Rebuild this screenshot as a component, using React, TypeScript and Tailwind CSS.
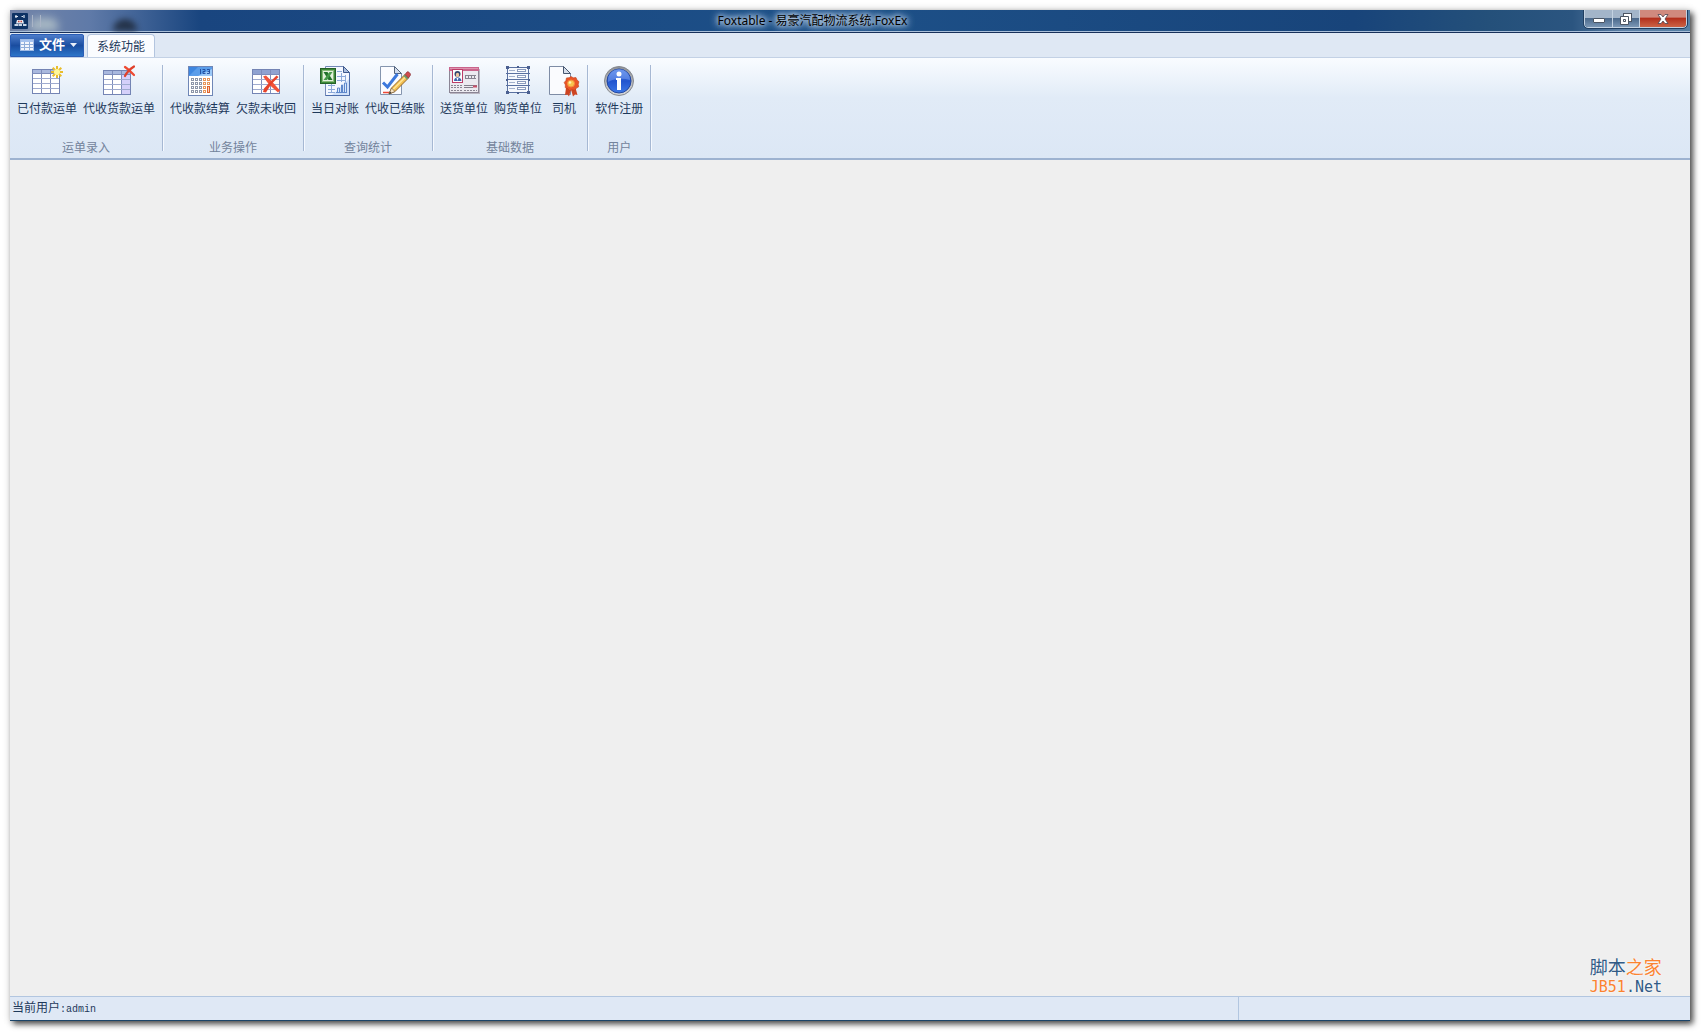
import { ReactNode } from "react";

function PaidOrderIcon() {
  return (
    <svg viewBox="0 0 32 32" className="size-8" aria-hidden="true">
      <rect x="1.5" y="4.5" width="27" height="24" fill="#fff" stroke="#7484b4" />
      <rect x="2" y="5" width="26" height="3" fill="#a9b8de" />
      <path d="M1 8.5h28M10.5 5v24M19.5 5v24" stroke="#7e8dbb" fill="none" />
      <path d="M2 13.5h26M2 18.5h26M2 23.5h26" stroke="#9fabcf" fill="none" />
      <path d="M26 1v12M20 7h12M21.7 2.7l8.6 8.6M30.3 2.7l-8.6 8.6" stroke="#e9bd2c" strokeWidth="2" />
      <circle cx="26" cy="7" r="3" fill="#fff89c" />
    </svg>
  );
}

function CollectOrderIcon() {
  return (
    <svg viewBox="0 0 32 32" className="size-8" aria-hidden="true">
      <rect x="0.5" y="5.5" width="27" height="24" fill="#fff" stroke="#7484b4" />
      <rect x="1" y="6" width="26" height="3" fill="#a9b8de" />
      <rect x="19" y="10" width="8" height="19" fill="#d5d0fa" />
      <path d="M0 9.5h28M9.5 6v23M18.5 6v23" stroke="#7e8dbb" fill="none" />
      <path d="M1 14.5h26M1 19.5h26M1 24.5h26" stroke="#9fabcf" fill="none" />
      <path d="M22 2c3 2 6 5 9 8" stroke="#ee4a32" strokeWidth="2.2" fill="none" strokeLinecap="round" />
      <path d="M31 1.5C27 4 24 7 22 11" stroke="#e0402b" strokeWidth="2.2" fill="none" strokeLinecap="round" />
    </svg>
  );
}

function CalculatorIcon() {
  const rows = [14, 18, 22, 26];
  return (
    <svg viewBox="0 0 32 32" className="size-8" aria-hidden="true">
      <rect x="4.5" y="1.5" width="24" height="29" fill="#fff" stroke="#6f86b6" />
      <rect x="5" y="2" width="23" height="9" fill="#5a9dea" />
      <path d="M5 2h9L5 11z" fill="#3e87e0" />
      <path d="M28 4v7H14z" fill="#9cc9f8" />
      <path d="M16.5 4v5M18.5 4.5H21v2h-2v2h2.500M23 4.500h2.500v4H23M23.500 6.500h2" stroke="#1d4a9c" strokeWidth=".9" fill="none" />
      {rows.map((y) => (
        <g key={y} fill="#fff">
          <rect x="7.500" y={y - 0.5} width="2" height="2" stroke="#8d96a8" />
          <rect x="11.500" y={y - 0.5} width="2" height="2" stroke="#8d96a8" />
          <rect x="15.500" y={y - 0.5} width="2" height="2" stroke="#8d96a8" />
          <rect x="19.500" y={y - 0.5} width="2" height="2" stroke="#e8965a" />
          {y < 22 && <rect x="23.500" y={y - 0.5} width="2" height="2" stroke="#e8965a" />}
        </g>
      ))}
      <rect x="23.500" y="21.500" width="2" height="6" fill="#fbd3b8" stroke="#e0622d" />
    </svg>
  );
}

function UnpaidIcon() {
  return (
    <svg viewBox="0 0 32 32" className="size-8" aria-hidden="true">
      <rect x="2.5" y="4.5" width="27" height="24" fill="#fff" stroke="#7484b4" />
      <rect x="3" y="5" width="26" height="4" fill="#8fa2d1" />
      <path d="M2 9.500h28M11.500 5v23M20.500 5v23" stroke="#7e8dbb" fill="none" />
      <path d="M3 14.500h26M3 19.500h26M3 24.500h26" stroke="#9fabcf" fill="none" />
      <path d="M13 11.500l3-1 6 6 8 9-2 2-9-8z" fill="#f2533a" />
      <path d="M26.500 10.500l2 1.500-7.500 7.500-5 8-3-.5 1-3.500 5.500-6z" fill="#e6432b" />
    </svg>
  );
}

function ExcelIcon() {
  return (
    <svg viewBox="0 0 32 32" className="size-8" aria-hidden="true">
      <path d="M6.500 1.500h18l6 6v23h-24z" fill="#f3f7ff" stroke="#7489b8" />
      <path d="M30 14v16H13z" fill="#cfe0f9" />
      <path d="M24.500 1.500l6 6h-6z" fill="#a9bddd" stroke="#3e588b" />
      <path d="M30.500 7.500v23h-24" stroke="#4d6dab" fill="none" />
      <path d="M18 6.500h5M18 11.500h9M18 15.500h9M9 20.500h7M9 24.500h7M9 27.500h7M12.500 19v9M22.500 8v9M26.500 10v7" stroke="#8ba9d9" fill="none" />
      <path d="M17 27.500h11M18.500 27v-4h2v4M22.500 27v-7h1v7M25.500 27v-9h2v9" stroke="#5f88cb" fill="#d9e8fb" />
      <rect x="1.500" y="3.500" width="15" height="15" fill="#3d8a3a" stroke="#256128" />
      <rect x="3.500" y="5.500" width="11" height="11" fill="#e4f2dc" stroke="#87b879" />
      <path d="M4.500 7h4l5 8h-4z" fill="#22712a" />
      <path d="M10.500 7h3l-5.500 8H4.500z" fill="#459948" />
    </svg>
  );
}

function CheckedNoteIcon() {
  return (
    <svg viewBox="0 0 32 32" className="size-8" aria-hidden="true">
      <path d="M1.500 1.500h14l7 7v21h-21z" fill="#fbfcff" stroke="#8595ae" />
      <path d="M15.500 1.500v7h7z" fill="#d2dcec" stroke="#53637c" />
      <path d="M4 27.500h8" stroke="#ee4937" strokeWidth="1.500" />
      <path d="M4 17.500L8.500 22 18.500 9" stroke="#3c78dc" strokeWidth="3" fill="none" />
      <path d="M10 29l2.500-6L26 9.500l3.500 3.500L16 26.500z" fill="#f3bf50" stroke="#95672a" />
      <path d="M14 24.500L27 11.500" stroke="#ffe596" strokeWidth="1.500" />
      <path d="M10 29l2.500-6 3.500 3.500z" fill="#f7e3c3" stroke="#7a6242" strokeWidth=".7" />
      <path d="M10 29l1-2.500 1.500 1.500z" fill="#333" />
      <path d="M24.500 11l1.500-1.500 3.500 3.500-1.500 1.500z" fill="#6d9a6a" />
      <path d="M26 9.500L28 7c1-1 4 1.500 3.500 3l-2 3z" fill="#d24a4c" stroke="#873439" strokeWidth=".7" />
    </svg>
  );
}

function SenderCardIcon() {
  return (
    <svg viewBox="0 0 32 32" className="size-8" aria-hidden="true">
      <rect x="1.500" y="2.500" width="29" height="25" fill="#eceaf0" stroke="#8b8595" />
      <path d="M2 28.500h30M31.500 4v25" stroke="#bab7c2" />
      <rect x="1" y="2" width="30" height="4" fill="#c9648b" />
      <path d="M2 3.500h28" stroke="#df93af" />
      <rect x="4.500" y="4.500" width="10" height="13" fill="#fff" stroke="#bd3c68" />
      <circle cx="9.500" cy="9" r="3" fill="#34456f" />
      <ellipse cx="9.500" cy="10" rx="1.700" ry="2.200" fill="#edc49f" />
      <path d="M6 16c0-5 7-5 7.500 0z" fill="#3f65ad" />
      <path d="M8.500 13h2L9.500 16z" fill="#fff" />
      <path d="M17 10.500h11M17 13.500h11" stroke="#87838f" />
      <path d="M17 12h12" stroke="#87838f" strokeDasharray="1 2" strokeWidth="2" />
      <path d="M3 20.500h12M3 22.500h12M3 25.500h12M16 25.500h13" stroke="#8a8693" strokeDasharray="2 1" />
      <path d="M16 20.500h13M16 22.500h9" stroke="#827e8b" />
      <path d="M25 21.500h4" stroke="#c94f68" strokeWidth="2" />
    </svg>
  );
}

function BuyerRackIcon() {
  const shelves = [4, 10, 16, 22];
  return (
    <svg viewBox="0 0 32 32" className="size-8" aria-hidden="true">
      <rect x="5" y="3" width="22" height="25" fill="#f5f8fd" />
      {shelves.map((y) => (
        <g key={y} fill="none">
          <path d={`M7 ${y + 1.5}h6`} stroke="#a3b1cc" />
          <rect x="15.500" y={y + 0.5} width="8" height="2" fill="#fff" stroke="#8b9bbd" />
        </g>
      ))}
      <path d="M4 2.500h24M4 8.500h24M4 14.500h24M4 20.500h24M4 27.500h24" stroke="#5970a0" />
      <path d="M5.500 2v26M26.500 2v26" stroke="#5970a0" />
      <path d="M4 1h3v3H4zM15 1h2v2h-2zM25 1h3v3h-3zM4 14h2v2H4zM26 14h2v2h-2zM4 26h3v3H4zM15 27h2v2h-2zM25 26h3v3h-3z" fill="#4a5f90" />
    </svg>
  );
}

function DriverIcon() {
  return (
    <svg viewBox="0 0 32 32" className="size-8" aria-hidden="true">
      <path d="M1.500 1.500h14l7 7v21h-21z" fill="#fafbfe" stroke="#7e8ca5" />
      <path d="M15.500 1.500v7h7z" fill="#d5ddea" stroke="#46566f" />
      <path d="M18 23l-1 7 2.500-.5 1.500 2 2-7 2 7 2-2 2.500.5-2-7z" fill="#ce4421" />
      <path
        d="M23 11.500l2.300 1.300 2.700-.2 1 2.400 2 1.700-.8 2.500.5 2.600-2.300 1.300-1.700 2.200-2.600-.5-2.600.8-1.800-2-2.500-1 .2-2.700-1.200-2.400 1.700-2 .6-2.600 2.600-.2z"
        fill="#ea5526"
        stroke="#bd3e1c"
        strokeWidth=".6"
      />
      <circle cx="23" cy="18.500" r="3.500" fill="#f9c34e" stroke="#f58d3e" />
      <circle cx="22" cy="17.500" r="1.300" fill="#fff3b0" />
    </svg>
  );
}

function RegisterIcon() {
  return (
    <svg viewBox="0 0 32 32" className="size-8" aria-hidden="true">
      <defs>
        <linearGradient id="ring" x1="0" y1="0" x2="0" y2="1">
          <stop offset="0" stopColor="#8d9096" />
          <stop offset="1" stopColor="#d7d8da" />
        </linearGradient>
        <linearGradient id="disc" x1="0" y1="0" x2="0" y2="1">
          <stop offset="0" stopColor="#5d8dec" />
          <stop offset=".5" stopColor="#2355ce" />
          <stop offset="1" stopColor="#3d78e6" />
        </linearGradient>
      </defs>
      <circle cx="16" cy="16" r="14.500" fill="url(#ring)" stroke="#86898f" />
      <circle cx="16" cy="16" r="12" fill="url(#disc)" stroke="#2347a0" />
      <path d="M5 15a11 11 0 0 1 22 0c-7-2-15-2-22 2z" fill="#7da3f1" opacity=".5" />
      <circle cx="16" cy="9" r="2.500" fill="#fff" />
      <path d="M13 13h5v12h-4V15h-1z" fill="#fff" />
    </svg>
  );
}

const groups: { title: string; items: { label: string; icon: ReactNode }[] }[] = [
  {
    title: "运单录入",
    items: [
      { label: "已付款运单", icon: <PaidOrderIcon /> },
      { label: "代收货款运单", icon: <CollectOrderIcon /> },
    ],
  },
  {
    title: "业务操作",
    items: [
      { label: "代收款结算", icon: <CalculatorIcon /> },
      { label: "欠款未收回", icon: <UnpaidIcon /> },
    ],
  },
  {
    title: "查询统计",
    items: [
      { label: "当日对账", icon: <ExcelIcon /> },
      { label: "代收已结账", icon: <CheckedNoteIcon /> },
    ],
  },
  {
    title: "基础数据",
    items: [
      { label: "送货单位", icon: <SenderCardIcon /> },
      { label: "购货单位", icon: <BuyerRackIcon /> },
      { label: "司机", icon: <DriverIcon /> },
    ],
  },
  { title: "用户", items: [{ label: "软件注册", icon: <RegisterIcon /> }] },
];

function TitleBar() {
  return (
    <header className="relative flex h-[23px] shrink-0 items-start overflow-hidden border-b border-[#17305a] bg-[linear-gradient(90deg,#7384a8_0,#5f7aa8_80px,#19457f_190px,#1d5088_50%,#18447a_80%,#24507a_88%,#2b5580_93%,#5c7fa5_96%,#5580a5_100%)] shadow-[inset_0_-1px_0_#a9bfd9]">
      {/* desktop showing through the glass */}
      <div className="absolute top-2 left-5 h-[13px] w-7 rounded-t-lg bg-[#c2d0d0] opacity-70 blur-xs" />
      <div className="absolute top-[9px] left-[103px] h-3 w-6 rounded-t-full bg-[#1b2534] opacity-80 blur-[3px]" />
      <div className="relative flex items-center gap-1 pt-[3px] pl-[2px]">
        <svg viewBox="0 0 16 16" className="size-4" aria-hidden="true">
          <rect width="16" height="16" rx="1" fill="#0d3264" />
          <path d="M3 3.500h3M4 2v3M9.500 3.500h1.500M12 2v3" stroke="#dbe5f2" strokeWidth="1.200" />
          <path d="M5 7h6l1 3.500H4z" fill="#e6ecf4" />
          <path d="M6 8.500h1.500M8.500 8.500H10" stroke="#c7443c" strokeWidth="1.500" />
          <path d="M2.500 12h4M7 12h3M11 12h3.500" stroke="#c8d5e6" strokeWidth="2" />
        </svg>
        <div className="h-3 w-[9px] border-x border-[#a9b4c6]" />
      </div>
      <h1 className="relative flex-1 pt-px text-center text-xs leading-5 text-black [text-shadow:0_0_4px_#b7cde6,0_0_6px_#b7cde6,0_0_8px_#b7cde6,0_0_10px_#b7cde6]">
        Foxtable - 易豪汽配物流系统.FoxEx
      </h1>
      <div className="relative flex justify-end pr-[3px]">
        <div className="flex h-[18px] overflow-hidden rounded-b border border-t-0 border-[#c3d2e2] outline outline-[#203e60]">
          <button aria-label="最小化" className="flex w-7 items-center justify-center border-r border-[#c3d2e2] bg-linear-to-b from-[#a3b5c9] from-45% via-[#4c6a8c] via-50% to-[#7b97b5]">
            <svg viewBox="0 0 12 10" className="h-[10px] w-3">
              <rect x="0.500" y="4.500" width="11" height="4" rx=".5" fill="#fff" stroke="#4b5563" />
            </svg>
          </button>
          <button aria-label="还原" className="flex w-[27px] items-center justify-center border-r border-[#c3d2e2] bg-linear-to-b from-[#a3b5c9] from-45% via-[#4c6a8c] via-50% to-[#7b97b5]">
            <svg viewBox="0 0 12 12" className="size-3">
              <rect x="3.500" y=".5" width="8" height="8" fill="#fff" stroke="#4b5563" />
              <path d="M.5 3.500h8v8h-8zM3.500 6.500v2h2v-2z" fill="#fff" fillRule="evenodd" stroke="#4b5563" />
            </svg>
          </button>
          <button aria-label="关闭" className="flex w-[46px] items-center justify-center bg-linear-to-b from-[#d08a7e] from-40% via-[#b3301d] via-50% to-[#cb6245]">
            <svg viewBox="0 0 12 10" className="h-[10px] w-3">
              <path d="M1 .5h3L6 3 8 .5h3L8 5l3 4.500H8L6 7 4 9.500H1L4 5z" fill="#fff" stroke="#4b4450" strokeWidth=".8" />
            </svg>
          </button>
        </div>
      </div>
    </header>
  );
}

export default function App() {
  return (
    <div className="h-screen bg-white pt-[10px] pr-[11px] pb-[11px] pl-[10px] font-['Noto_Sans','Noto_Sans_CJK_SC',sans-serif]">
      <div className="flex h-full flex-col border-b border-[#1b4468] bg-[#efefef] shadow-[3px_3px_6px_#000000b3,0_0_8px_#00000026]">
        <TitleBar />

        <nav className="flex h-6 shrink-0 items-end gap-[3px] bg-[#dfe8f4]">
          <button className="flex h-[23px] w-[74px] items-center gap-[5px] self-center rounded-t-xs border border-[#2a5db5] bg-linear-to-b from-[#4c7cca] via-[#1a4da0] via-50% to-[#2d75c9] pl-[9px] text-[13px] font-bold text-white">
            <svg viewBox="0 0 14 12" className="h-3 w-[14px]" aria-hidden="true">
              <rect x=".5" y=".5" width="13" height="11" fill="#f2f6fd" stroke="#9db9e4" />
              <path d="M1 2h12" stroke="#a5c2ee" strokeWidth="2" />
              <path d="M1 5.500h12M1 8.500h12M4.500 3v8M9.500 3v8" stroke="#8fadd9" />
            </svg>
            文件
            <svg viewBox="0 0 7 4" className="h-1 w-[7px]" aria-hidden="true">
              <path d="M0 0h7L3.500 4z" fill="#e9effa" />
            </svg>
          </button>
          <button className="h-[23px] rounded-t-sm border border-b-0 border-[#b3c5df] bg-[#fafcff] px-[9px] pt-px text-xs text-[#1e395b]">
            系统功能
          </button>
        </nav>

        <div className="flex h-[103px] shrink-0 border-t border-b-2 border-t-[#c3d1e5] border-b-[#9db2d0] bg-linear-to-b from-[#f9fcff] via-[#e1ebf7] via-40% to-[#dce7f5] pt-[7px] pb-[7px] text-xs">
          {groups.map((group) => (
            <section
              key={group.title}
              className="flex flex-col justify-between border-r border-[#a6b8d3] px-1 shadow-[1px_0_0_#f5f9ff]"
            >
              <div className="flex">
                {group.items.map((item) => (
                  <button key={item.label} className="flex flex-col items-center gap-[3px] px-[3px] text-[#1e395b]">
                    {item.icon}
                    <span className="leading-[18px] whitespace-nowrap">{item.label}</span>
                  </button>
                ))}
              </div>
              <h2 className="text-center leading-[6px] text-[#73839b]">{group.title}</h2>
            </section>
          ))}
        </div>

        <main className="flex flex-1 items-end justify-end pr-[28px]">
          <div className="text-[#315b86] [text-shadow:0_0_2px_#fff]">
            <div className="text-lg leading-[22px]">
              脚本<span className="text-[#fb8330]">之家</span>
            </div>
            <div className="font-['DejaVu_Sans_Mono',monospace] text-[15px] leading-[18px]">
              <span className="text-[#fb8330]">JB51</span>.Net
            </div>
          </div>
        </main>

        <footer className="flex h-6 shrink-0 border-t border-[#b2c6e0] bg-[#dfe8f5] text-xs leading-[22px] text-[#1e395b]">
          <div className="flex-1 pl-[2px]">
            当前用户<span className="font-['Liberation_Mono',monospace] text-[10px]">:admin</span>
          </div>
          <div className="w-[452px] border-l border-[#b2c6e0]" />
        </footer>
      </div>
    </div>
  );
}
